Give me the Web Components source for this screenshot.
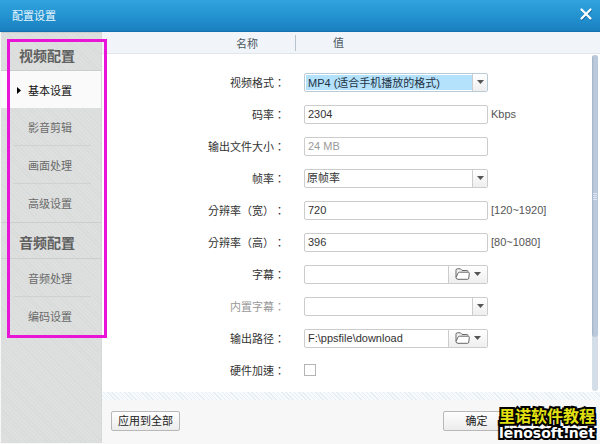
<!DOCTYPE html>
<html lang="zh-CN">
<head>
<meta charset="utf-8">
<title>配置设置</title>
<style>
html, body { height: 100%; margin: 0; }
body { font: 11px/16px "Liberation Sans", "Noto Sans CJK SC", sans-serif; color: #333; background: #fff; }
</style>
</head>
<body>
<settings-window>
  <title-bar slot="title">配置设置</title-bar>
  <side-nav slot="nav">
    <nav-group heading="视频配置">
      <nav-item active>基本设置</nav-item>
      <nav-item>影音剪辑</nav-item>
      <nav-item>画面处理</nav-item>
      <nav-item>高级设置</nav-item>
    </nav-group>
    <nav-group heading="音频配置">
      <nav-item>音频处理</nav-item>
      <nav-item>编码设置</nav-item>
    </nav-group>
  </side-nav>
  <column-header slot="columns" name="名称" value="值"></column-header>
  <setting-field label="视频格式" type="select" value="MP4 (适合手机播放的格式)" picked></setting-field>
  <setting-field label="码率" type="text" value="2304" unit="Kbps"></setting-field>
  <setting-field label="输出文件大小" type="text" value="24 MB" readonly></setting-field>
  <setting-field label="帧率" type="select" value="原帧率"></setting-field>
  <setting-field label="分辨率（宽）" type="text" value="720" unit="[120~1920]"></setting-field>
  <setting-field label="分辨率（高）" type="text" value="396" unit="[80~1080]"></setting-field>
  <setting-field label="字幕" type="path" value=""></setting-field>
  <setting-field label="内置字幕" type="select" value="" off></setting-field>
  <setting-field label="输出路径" type="path" value="F:\ppsfile\download"></setting-field>
  <setting-field label="硬件加速" type="check"></setting-field>
  <push-button slot="start">应用到全部</push-button>
  <push-button slot="end">确定</push-button>
  <site-mark slot="mark" name="里诺软件教程" domain="lenosoft.net"></site-mark>
</settings-window>

<script>
class Base extends HTMLElement {
  connectedCallback() {
    if (this.shadowRoot) return;
    this.attachShadow({ mode: "open" }).innerHTML =
      "<style>*{box-sizing:border-box}button,input,select{font:inherit;color:inherit;margin:0}</style>" + this.view();
  }
  attr(n) { return this.getAttribute(n) || ""; }
}

customElements.define("settings-window", class extends Base {
  view() { return `
    <style>
      :host { display: flex; flex-direction: column; height: 100vh; position: relative; overflow: hidden; }
      .body { flex: 1; display: flex; min-height: 0; padding: 0 0 1px 1px; background: #f7f7f7; }
      .right { flex: 1; display: flex; flex-direction: column; min-width: 0; }
      .pane { flex: 1; display: flex; min-height: 0; background: #fff; }
      form { flex: 1; min-width: 0; padding-top: 12px; overflow: hidden; }
      .track { width: 6px; margin: 1px 2px 1px 0; border-radius: 3px; background: #d3dee8; }
      .thumb { height: 84%; border-radius: 3px; background: linear-gradient(90deg, #a3b3c8, #bccbdd 40%, #b7c7da);
        display: flex; flex-direction: column; gap: 1px; align-items: center; justify-content: center; }
      .thumb i { width: 4px; height: 1px; background: #dfe8f2; }
      .band { height: 8px; background: repeating-linear-gradient(45deg, #e6edf4 0 1px, #f8fbfd 1px 3px); }
      footer { height: 43px; display: flex; justify-content: space-between; align-items: center;
        padding: 0 90px 1px 9px; background: #f7f7f7; }
      .mark { position: absolute; right: 5px; bottom: 3px; }
    </style>
    <slot name="title"></slot>
    <div class="body">
      <slot name="nav"></slot>
      <div class="right">
        <slot name="columns"></slot>
        <div class="pane">
          <form><slot></slot></form>
          <div class="track"><div class="thumb"><i></i><i></i><i></i><i></i></div></div>
        </div>
        <div class="band"></div>
        <footer><slot name="start"></slot><slot name="end"></slot></footer>
      </div>
    </div>
    <div class="mark"><slot name="mark"></slot></div>`; }
});

customElements.define("title-bar", class extends Base {
  view() { return `
    <style>
      :host { display: flex; flex: none; align-items: center; justify-content: space-between; height: 32px;
        padding: 0 7px 0 12px; box-sizing: border-box; color: #e8f6ff;
        background: linear-gradient(#32a3de, #2595d2 45%, #1a80c0); border-bottom: 1px solid #1270ae; }
      button { display: flex; padding: 0; border: 0; background: none; margin-bottom: 3px; }
    </style>
    <span><slot></slot></span>
    <button type="button" aria-label="关闭"><svg width="14" height="14" viewBox="0 0 14 14" fill="none" stroke-linecap="round">
      <path d="M3 3.5l9 9M12 3.5l-9 9" stroke="#136399" stroke-width="2"/>
      <path d="M2.5 2.5l9 9M11.5 2.5l-9 9" stroke="#fff" stroke-width="2.2"/></svg></button>`; }
});

customElements.define("side-nav", class extends Base {
  view() { return `
    <style>
      :host { display: block; flex: none; width: 101px; position: relative; color: #666;
        background: repeating-linear-gradient(45deg, #d9dbda 0 1px, #dee0df 1px 3px); border-right: 1px solid #d6d8d7; box-sizing: border-box; }
      .frame { position: absolute; left: 6px; right: -6px; top: 7px; height: 299px; border: 3px solid #e815d8; pointer-events: none; box-sizing: border-box; }
    </style>
    <nav><slot></slot></nav><div class="frame"></div>`; }
});

customElements.define("nav-group", class extends Base {
  view() { return `
    <style>
      :host { display: block; }
      h2 { margin: 0; padding: 9px 0 0 18px; height: 39px; font-size: 14px; line-height: 28px; font-weight: 700; color: #606060;
        border: 1px solid #cccecd; border-width: 1px 0; }
      :host(:not(:first-child)) h2 { height: 37px; padding-top: 6px; }
    </style>
    <h2>${this.attr("heading")}</h2><slot></slot>`; }
});

customElements.define("nav-item", class extends Base {
  view() { return `
    <style>
      :host { display: block; }
      a { display: flex; align-items: center; height: 38px; margin: 0 10px 0 13px; padding: 2px 0 0 14px; color: #6a6a6a; text-decoration: none;
        border-bottom: 1px solid #cfd1d0; }
      :host(:last-child) a { border-bottom: 0; }
      :host([active]) a { margin: 0; padding-left: 16px; gap: 7px; height: 37px; color: #111; background: #fafafa; border: 0; }
      svg { display: none; }
      :host([active]) svg { display: block; }
    </style>
    <a href="#"><svg width="4" height="7" viewBox="0 0 4 7"><path d="M0 0l4 3.5L0 7z" fill="#000"/></svg><span><slot></slot></span></a>`; }
});

customElements.define("column-header", class extends Base {
  view() { return `
    <style>
      :host { display: grid; flex: none; grid-template-columns: 194px 1fr; align-items: center; height: 22px; box-sizing: border-box;
        background: #f1f5fa; border-bottom: 1px solid #dfe6ec; color: #4a5560; }
      .a { text-align: right; padding-right: 37px; border-right: 1px solid #b9c3cc; height: 16px; line-height: 18px; }
      .b { padding-left: 37px; line-height: 18px; }
    </style>
    <span class="a">${this.attr("name")}</span><span class="b">${this.attr("value")}</span>`; }
});

const arrow = '<svg class="arrow" width="7" height="4" viewBox="0 0 7 4"><path d="M0 0h7L3.5 4z" fill="#555"/></svg>';
const folder = `<svg width="15" height="12" viewBox="0 0 15 12" fill="none" stroke="#666" stroke-linejoin="round">
  <path d="M1 9.5V2.2Q1 .8 2.3.8H5.4L7 2.5H11.8Q13 2.5 13 3.6" fill="#f4f4f4"/>
  <path d="M4.2 4.2h9q1.2 0 1.1 1.1l-.5 4.800q-.1 1.200-1.200 1.200H3Q1.200 11.300 1 9.500L3 5.200Q3.400 4.200 4.200 4.200z" fill="#fff"/></svg>`;

customElements.define("setting-field", class extends Base {
  control() {
    const v = this.attr("value"), off = this.hasAttribute("off") ? "disabled" : "";
    switch (this.attr("type")) {
      case "select": return `<span class="box"><select id="c" ${off}><option>${v}</option></select><span class="drop">${arrow}</span></span>`;
      case "path": return `<span class="box"><input id="c" type="text" value="${v}"><button type="button" aria-label="浏览">${folder}${arrow}</button></span>`;
      case "check": return `<input id="c" type="checkbox">`;
      default: return `<span class="box"><input id="c" type="text" value="${v}" ${this.hasAttribute("readonly") ? "readonly" : ""}></span>`;
    }
  }
  view() { return `
    <style>
      :host { display: grid; grid-template-columns: 183px 19px 184px 1fr; align-items: center; height: 32px; }
      label { text-align: right; font-family: "Noto Sans CJK TC", sans-serif; text-spacing-trim: space-all; color: #333; white-space: nowrap; }
      .cell { grid-column: 3; display: flex; }
      .box { flex: 1; display: flex; height: 19px; min-width: 0; border: 1px solid #ccc; border-radius: 2px; background: #fff; }
      input[type=text], select { flex: 1; min-width: 0; width: 0; border: 0; outline: 0; padding: 0 3px; background: none; color: #333; }
      select { appearance: none; padding: 0 2px; opacity: 1; }
      :host([picked]) select { background: #b4e1fb; margin: 1px 0 1px 1px; color: #234; }
      :host([picked]) .box { border-color: #b9cbd6; }
      :host([readonly]) input { color: #999; }
      :host([off]) label { color: #999; }
      .drop, button { display: flex; align-items: center; justify-content: center; border: 0; border-left: 1px solid #ccc; background: linear-gradient(#fff, #eee); border-radius: 0 2px 2px 0; }
      .drop { width: 15px; pointer-events: none; }
      button { width: 39px; gap: 4px; padding: 0; }
      input[type=checkbox] { appearance: none; width: 12px; height: 12px; border: 1px solid #b5b5b5; background: #fff; }
      .unit { padding-left: 3px; color: #555; }
    </style>
    <label for="c" lang="zh-TW">${this.attr("label")}：</label>
    <span class="cell">${this.control()}</span>
    <span class="unit">${this.attr("unit")}</span>`; }
});

customElements.define("push-button", class extends Base {
  view() { return `
    <style>
      :host { display: block; }
      button { min-width: 67px; height: 20px; padding: 0 6px; line-height: 16px; color: #222; border: 1px solid #b8b8b8; border-radius: 2px;
        background: linear-gradient(#fefefe, #ececec); }
    </style>
    <button type="button"><slot></slot></button>`; }
});

customElements.define("site-mark", class extends Base {
  view() { return `
    <style>
      :host { display: block; text-align: center; font-weight: 700; }
      span { display: block; -webkit-text-stroke: 4px #000; paint-order: stroke fill; stroke-linejoin: round; }
      .n { font-size: 16px; line-height: 18px; color: #e2e010; }
      .d { font-family: "DejaVu Sans", sans-serif; font-size: 14px; line-height: 15px; margin: 0 -4px; color: #fff; }
    </style>
    <span class="n">${this.attr("name")}</span><span class="d">${this.attr("domain")}</span>`; }
});
</script>
</body>
</html>
